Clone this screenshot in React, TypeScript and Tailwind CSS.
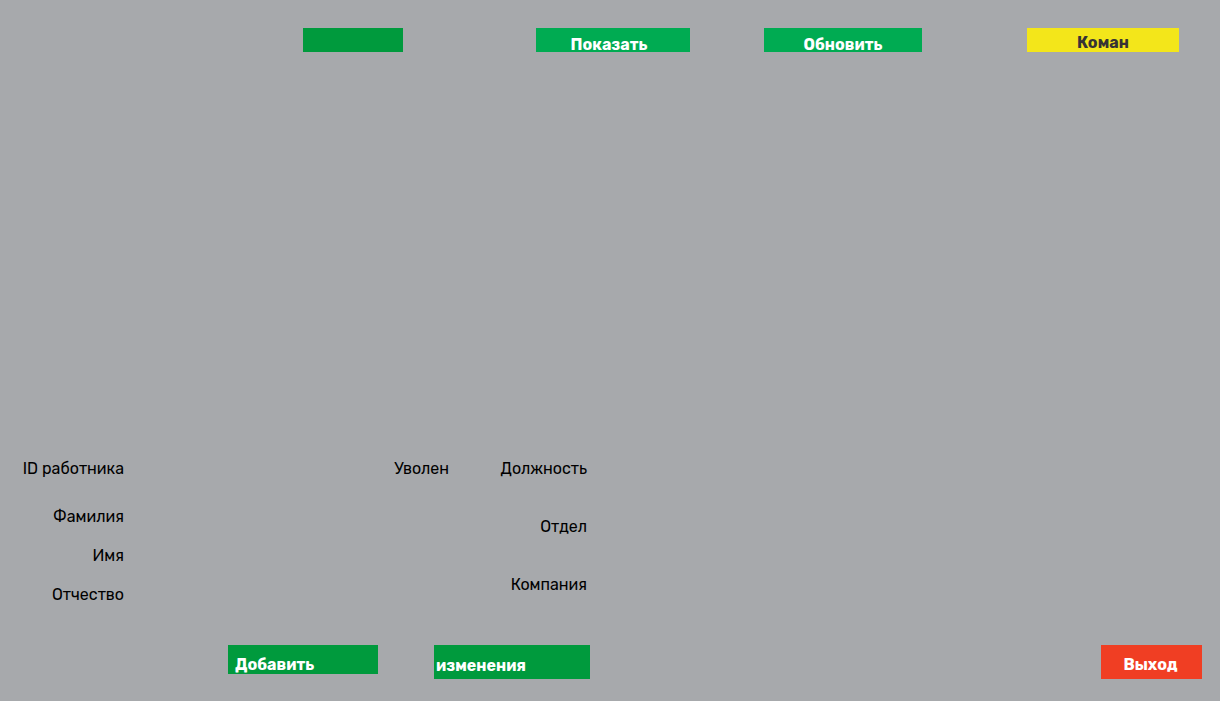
import type { ReactNode } from "react";

type FieldProps = { id: string; label: string };

function Field({ id, label }: FieldProps) {
  return (
    <div className="flex h-6 items-center gap-3">
      <label htmlFor={id} className="w-28 shrink-0 text-right">
        {label}
      </label>
      <input id={id} type="text" className="h-6 min-w-0 flex-1 bg-transparent outline-none" />
    </div>
  );
}

type ActionProps = { className: string; children?: ReactNode };

function Action({ className, children }: ActionProps) {
  return (
    <button type="button" className={`shrink-0 font-bold leading-5 ${className}`}>
      {children}
    </button>
  );
}

export default function App() {
  return (
    <main className="flex min-h-screen flex-col bg-[#a7a9ac] pt-7 pb-[22px] font-[Rubik,Roboto,sans-serif] text-base text-black">
      <header className="flex items-start pr-[41px] pl-[303px]">
        <Action className="h-6 w-[100px] bg-[#009a3d]" />
        <Action className="ml-[133px] h-6 w-[154px] bg-[#00ab52] pt-[7px] pr-2 text-white">Показать</Action>
        <Action className="ml-[74px] h-6 w-[158px] bg-[#00ab52] pt-[7px] text-white">Обновить</Action>
        <Action className="ml-auto h-6 w-[152px] bg-[#f3e61a] pt-[5px] text-[#373435]">Коман</Action>
      </header>

      <section className="flex-1" />

      <form className="flex items-start pl-3">
        <div className="flex w-[360px] flex-col gap-[15px]">
          <div className="pb-[9px]">
            <Field id="worker-id" label="ID работника" />
          </div>
          <Field id="surname" label="Фамилия" />
          <Field id="name" label="Имя" />
          <Field id="patronymic" label="Отчество" />
        </div>
        <div className="flex h-6 w-[103px] items-center justify-end gap-1 pr-1.5">
          <label htmlFor="dismissed">Уволен</label>
          <input id="dismissed" type="checkbox" className="h-4 w-4 appearance-none" />
        </div>
        <div className="flex flex-1 flex-col gap-[34px]">
          <Field id="position" label="Должность" />
          <Field id="department" label="Отдел" />
          <Field id="company" label="Компания" />
        </div>
      </form>

      <footer className="mt-[38px] flex items-start pr-[18px] pl-[228px]">
        <Action className="h-[29px] w-[150px] bg-[#009a3d] pt-2.5 pl-[7px] text-left text-white">Добавить</Action>
        <Action className="ml-14 h-[34px] w-[156px] bg-[#009a3d] pt-[7px] pl-0.5 text-left text-white">изменения</Action>
        <Action className="ml-auto h-[34px] w-[101px] bg-[#f03e23] pt-1.5 pr-0.5 text-white">Выход</Action>
      </footer>
    </main>
  );
}
